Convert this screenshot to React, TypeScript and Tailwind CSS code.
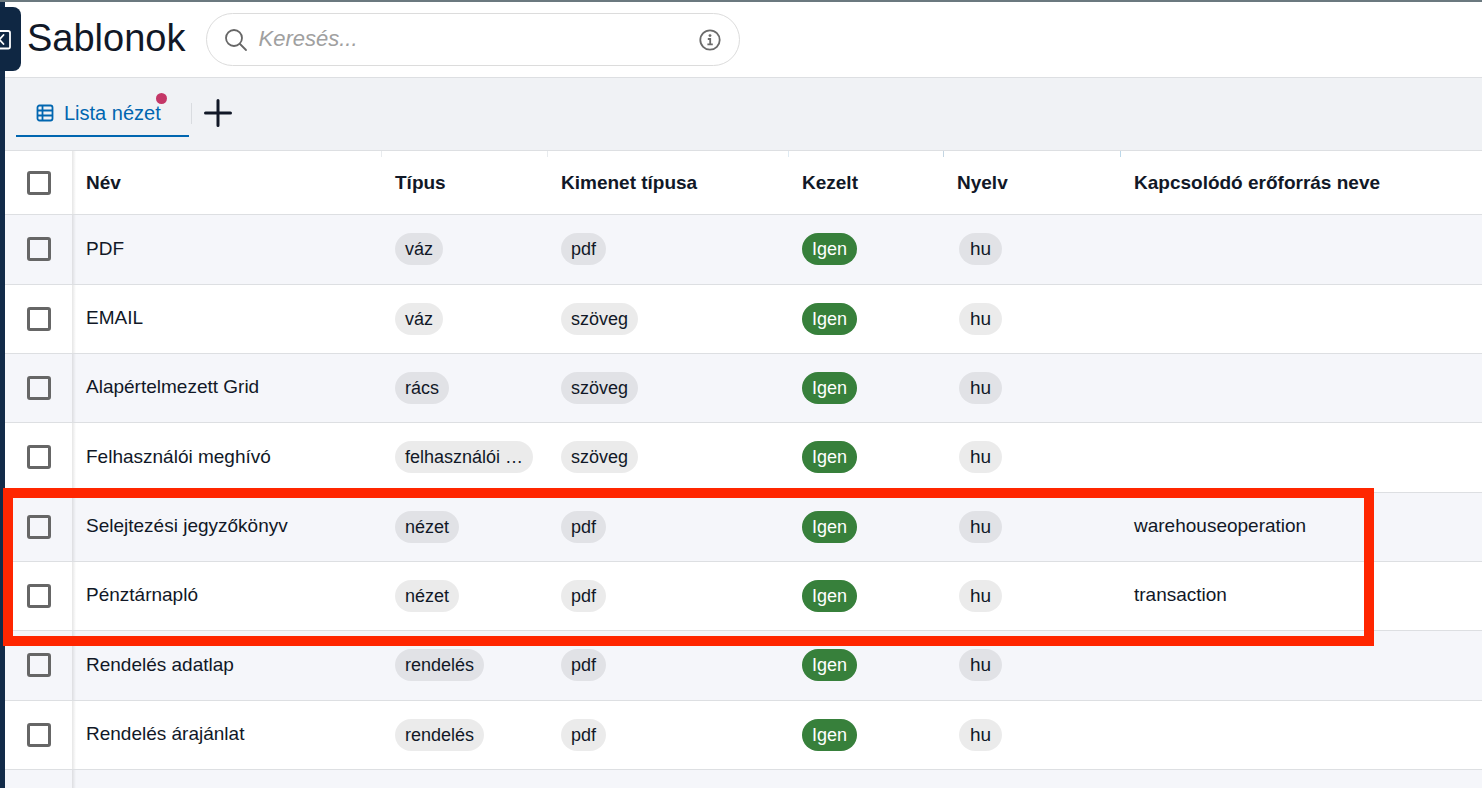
import React from "react";

interface TemplateItem {
  name: string;
  type: string;
  output: string;
  resource?: string;
}

const TEMPLATES: TemplateItem[] = [
  { name: "PDF", type: "váz", output: "pdf" },
  { name: "EMAIL", type: "váz", output: "szöveg" },
  { name: "Alapértelmezett Grid", type: "rács", output: "szöveg" },
  { name: "Felhasználói meghívó", type: "felhasználói …", output: "szöveg" },
  { name: "Selejtezési jegyzőkönyv", type: "nézet", output: "pdf", resource: "warehouseoperation" },
  { name: "Pénztárnapló", type: "nézet", output: "pdf", resource: "transaction" },
  { name: "Rendelés adatlap", type: "rendelés", output: "pdf" },
  { name: "Rendelés árajánlat", type: "rendelés", output: "pdf" },
];

const COLUMNS = [
  { label: "Név", tick: "" },
  { label: "Típus", tick: "bg-[#e8ebee]" },
  { label: "Kimenet típusa", tick: "bg-[#e8ebee]" },
  { label: "Kezelt", tick: "bg-[#dfeaf2]" },
  { label: "Nyelv", tick: "bg-[#c3d5e2]" },
  { label: "Kapcsolódó erőforrás neve", tick: "bg-[#bcd8ea]" },
];

const Checkbox: React.FC<{ label: string }> = ({ label }) => (
  <input
    type="checkbox"
    aria-label={label}
    className="block size-6 appearance-none rounded-[3px] border-[3px] border-[#666666] checked:bg-[#0066b0]"
  />
);

// the pinned column throws a soft shadow on the rest of the row
const PINNED =
  "relative px-0 pl-[22px] after:absolute after:inset-y-0 after:left-full after:w-1 after:bg-linear-to-r after:from-black/10 after:to-transparent";

const Chip: React.FC<{ children: string }> = ({ children }) => (
  <span className="inline-block h-8 rounded-full bg-black/8 px-[10px] align-middle text-lg leading-8 whitespace-nowrap">
    {children}
  </span>
);

const TemplateTable: React.FC = () => (
  <div className="relative">
    <table className="w-full table-fixed border-collapse text-left text-[19px]">
      <colgroup>
        <col className="w-[67px]" />
        <col className="w-[309px]" />
        <col className="w-[166px]" />
        <col className="w-[241px]" />
        <col className="w-[155px]" />
        <col className="w-[177px]" />
        <col />
      </colgroup>
      <thead>
        <tr className="h-[63px] border-b border-[#dddfe2]">
          <th className={`pt-0.5 ${PINNED}`}>
            <Checkbox label="Összes kijelölése" />
          </th>
          {COLUMNS.map((column) => (
            <th key={column.label} className="relative px-[14px] pt-0.5 font-bold">
              {column.tick && (
                <span className={`absolute top-0 left-0 h-1.5 w-px ${column.tick}`} />
              )}
              {column.label}
            </th>
          ))}
        </tr>
      </thead>
      <tbody>
        {TEMPLATES.map((item, index) => (
          <tr
            key={item.name}
            className={`border-b border-[#dddfe2] odd:bg-[#f5f6fa] ${
              index % 3 === 0 ? "h-[70px]" : "h-[69px]"
            }`}
          >
            <td className={PINNED}>
              <Checkbox label={item.name} />
            </td>
            <td className="truncate px-[14px]">{item.name}</td>
            <td className="pr-3 pl-[14px]">
              <Chip>{item.type}</Chip>
            </td>
            <td className="px-[14px]">
              <Chip>{item.output}</Chip>
            </td>
            <td className="px-[14px]">
              <span className="inline-block h-8 rounded-full bg-[#37803b] px-[10px] align-middle text-lg leading-8 text-white">
                Igen
              </span>
            </td>
            <td className="px-4">
              <span className="inline-block h-8 rounded-full bg-black/8 px-[11px] align-middle leading-8">
                hu
              </span>
            </td>
            <td className="px-[14px]">{item.resource}</td>
          </tr>
        ))}
        <tr className="h-[70px] bg-[#f5f6fa]">
          <td className={PINNED} />
          <td colSpan={6} />
        </tr>
      </tbody>
    </table>
    {/* highlight frame over the two resource templates */}
    <div className="pointer-events-none absolute top-[337px] -left-0.5 h-[158px] w-[1371px] border-10 border-[#ff2600]" />
  </div>
);

const App: React.FC = () => {
  return (
    <div className="flex h-screen flex-col overflow-hidden border-t-2 border-[#6b797f] bg-white font-['Liberation_Sans',Arial,sans-serif] text-[#111827]">
      <div className="flex min-h-0 grow">
        <aside className="relative w-[5px] shrink-0 bg-[#122b49]">
          <button
            type="button"
            aria-label="Menü"
            className="absolute top-[5px] left-0 z-10 h-16 w-[21px] overflow-hidden rounded-r-lg bg-[#0f2743]"
          >
            <svg viewBox="0 0 21 64" className="h-16 w-[21px]" fill="none" stroke="white" strokeWidth="1.8" strokeLinecap="round" strokeLinejoin="round">
              <rect x="-8" y="24" width="18" height="17.500" rx="1.800" />
              <path d="M3.500 28-.5 32.500l4 4.500" />
            </svg>
          </button>
        </aside>

        <main className="min-w-0 grow">
          <header className="flex h-[76px] items-center gap-[21px] border-b border-[#dddfe2] pl-[22px]">
            <h1 className="pb-[3px] text-[38px] leading-none">Sablonok</h1>
            <label className="flex h-[53px] w-[534px] items-center gap-[10px] rounded-full border border-[#dcdcdc] px-[17px]">
              <svg viewBox="0 0 24 24" className="size-6 shrink-0" fill="none" stroke="#666" strokeWidth="1.8" strokeLinecap="round">
                <circle cx="10" cy="10" r="8" />
                <path d="m16 16 6 6" />
              </svg>
              <input
                type="search"
                placeholder="Keresés..."
                className="min-w-0 grow bg-transparent pb-0.5 text-[22px] outline-none placeholder:text-[#a0a0a0] placeholder:italic"
              />
              <svg viewBox="0 0 24 24" className="size-6 shrink-0" fill="none" stroke="#6b6b6b" strokeWidth="1.8">
                <circle cx="12" cy="12" r="9.7" />
                <path d="M9.8 11h2.4v5.2M9.4 16.4h5.4" />
                <circle cx="12" cy="7.6" r="1.4" fill="#6b6b6b" stroke="none" />
              </svg>
            </label>
          </header>

          <nav className="flex h-[73px] items-center border-b border-[#dddfe2] bg-[#f0f2f5] pb-0.5 pl-[11px]">
            <button
              type="button"
              className="mt-[11px] flex h-12 w-[173px] items-center gap-[10px] self-start border-b-2 border-[#0066b0] pt-0.5 pl-5 text-xl text-[#0066b0]"
            >
              <svg viewBox="0 0 18 18" className="size-[18px]" fill="none" stroke="currentColor" strokeWidth="1.8">
                <rect x="1.500" y="1.500" width="15" height="15" rx="2" />
                <path d="M1.500 6.500h15M1.500 11.500h15M6.500 1.500v15" />
              </svg>
              <span className="relative">
                Lista nézet
                <span className="absolute -top-1.5 -right-1.5 size-[11px] rounded-full bg-[#c43767]" />
              </span>
            </button>
            <span className="mr-3 ml-0.5 h-[21px] w-px bg-[#d9dce0]" />
            <button type="button" aria-label="Új nézet">
              <svg viewBox="0 0 28 28" className="size-7" stroke="#111827" strokeWidth="3" strokeLinecap="round">
                <path d="M14 1.500v25M1.500 14h25" />
              </svg>
            </button>
          </nav>

          <TemplateTable />
        </main>
      </div>
    </div>
  );
};

export default App;
